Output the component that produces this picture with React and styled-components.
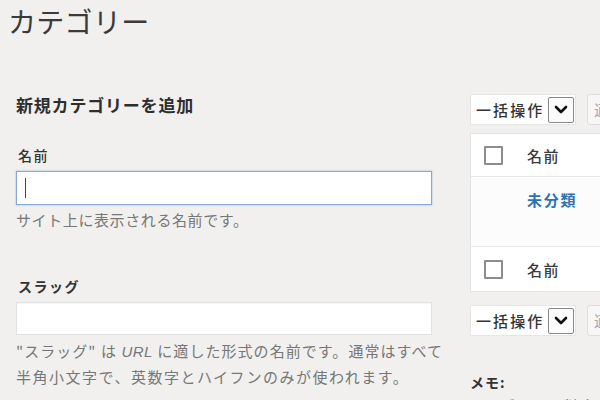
import React from 'react';
import styled, { createGlobalStyle } from 'styled-components';

const GlobalStyle = createGlobalStyle`
  html, body {
    margin: 0;
    padding: 0;
    background: #f1f0ee;
  }
  body {
    font-family: "Noto Sans CJK JP", "Noto Sans", sans-serif;
    color: #333;
  }
`;

const Page = styled.div`
  width: 600px;
  height: 400px;
  overflow: hidden;
  padding: 0 0 0 8px;
  box-sizing: border-box;
`;

const Title = styled.h1`
  margin: 0;
  padding-top: 2px;
  font-size: 28px;
  line-height: 38px;
  font-weight: 400;
  color: #3a3a3a;
  letter-spacing: 0.3px;
`;

const Columns = styled.div`
  display: flex;
  gap: 38px;
  margin-top: 54px;
  padding-left: 8px;
`;

const Left = styled.div`
  width: 416px;
  flex-shrink: 0;
`;

const Right = styled.div`
  width: 320px;
  flex-shrink: 0;
`;

const Heading = styled.h2`
  margin: 0;
  font-size: 17px;
  line-height: 22px;
  font-weight: 700;
  letter-spacing: 0.8px;
  color: #2e2e2e;
`;

const Label = styled.div`
  margin: ${(p) => p.$top}px 0 0 2px;
  font-size: 14px;
  line-height: 20px;
  font-weight: ${(p) => (p.$bold ? 700 : 500)};
  letter-spacing: 1.5px;
  color: #333;
`;

const Field = styled.div`
  margin-top: ${(p) => p.$top}px;
  height: ${(p) => p.$h}px;
  box-sizing: border-box;
  background: #fff;
  border: 1px solid ${(p) => (p.$focus ? '#86a9d3' : '#e2e2e2')};
  box-shadow: ${(p) => (p.$focus ? '0 0 2px rgba(60,120,200,0.45)' : 'inset 0 1px 1px rgba(0,0,0,0.04)')};
  display: flex;
  align-items: center;
  padding-left: 8px;
`;

const Caret = styled.span`
  width: 1px;
  height: 20px;
  background: #444;
`;

const Hint = styled.p`
  margin: ${(p) => p.$top}px 0 0;
  font-size: 15px;
  line-height: 25px;
  letter-spacing: 0.6px;
  color: #777;
  white-space: nowrap;
`;

const DescLine = styled.span`
  display: block;
  letter-spacing: ${(p) => p.$ls}px;

  em {
    font-family: "Liberation Sans", sans-serif;
    letter-spacing: 0.5px;
  }
`;

const ActionBar = styled.div`
  display: flex;
  gap: 11px;
  margin-top: ${(p) => p.$top}px;
`;

const Select = styled.div`
  width: 106px;
  height: 31px;
  box-sizing: border-box;
  background: #fff;
  border: 1px solid #e6e6e6;
  display: flex;
  align-items: center;
  padding-left: 5px;
  font-size: 15px;
  font-weight: 500;
  letter-spacing: 2.1px;
  color: #333;
`;

const SelectText = styled.span`
  flex: 1;
  white-space: nowrap;
`;

const ArrowBox = styled.span`
  width: 26px;
  height: 26px;
  margin-right: 1px;
  box-sizing: border-box;
  border: 1px solid #888;
  border-radius: 2px;
  display: flex;
  align-items: center;
  justify-content: center;
  background: #fbfbfb;
`;

const ApplyButton = styled.div`
  width: 60px;
  height: 31px;
  box-sizing: border-box;
  background: #f7f7f7;
  border: 1px solid #ddd;
  border-radius: 3px;
  font-size: 15px;
  line-height: 29px;
  padding-left: 6px;
  color: #aaa;
`;

const Table = styled.div`
  margin-top: 8px;
  background: #fff;
  border: 1px solid #e3e3e3;
  border-right: none;
`;

const Row = styled.div`
  display: flex;
  align-items: ${(p) => (p.$top ? 'flex-start' : 'center')};
  height: ${(p) => p.$h}px;
  padding-left: 13px;
  box-sizing: border-box;
  padding-top: ${(p) => (p.$top ? 12 : 0)}px;
  background: ${(p) => (p.$alt ? '#fcfcfc' : '#fff')};
  border-bottom: ${(p) => (p.$last ? 'none' : '1px solid #e8e8e8')};
`;

const Check = styled.span`
  width: 19px;
  height: 19px;
  box-sizing: border-box;
  border: 2px solid #8d8d8d;
  border-radius: 1px;
  background: #fff;
  flex-shrink: 0;
`;

const Spacer = styled.span`
  width: 19px;
  flex-shrink: 0;
`;

const ColText = styled.span`
  margin-left: 24px;
  font-size: 15px;
  font-weight: 500;
  letter-spacing: 1.5px;
  color: #3b3b3b;
`;

const CatLink = styled.a`
  margin-left: 24px;
  font-size: 15px;
  font-weight: 700;
  letter-spacing: 1.7px;
  color: #2d72b0;
  text-decoration: none;
`;

const Memo = styled.div`
  margin-top: 36px;
  font-size: 14px;
  font-weight: 700;
  color: #333;
  letter-spacing: 1px;
`;

const MemoText = styled.div`
  margin-top: 3px;
  font-size: 14px;
  line-height: 20px;
  color: #666;
  letter-spacing: 1.5px;
  white-space: nowrap;
`;

function Chevron() {
  return (
    <svg width="14" height="10" viewBox="0 0 14 10">
      <polyline points="2,2 7,7 12,2" fill="none" stroke="#111" strokeWidth="2.6" strokeLinecap="round" strokeLinejoin="round" />
    </svg>
  );
}

function BulkActions({ top }) {
  return (
    <ActionBar $top={top}>
      <Select>
        <SelectText>一括操作</SelectText>
        <ArrowBox>
          <Chevron />
        </ArrowBox>
      </Select>
      <ApplyButton>適用</ApplyButton>
    </ActionBar>
  );
}

export default function App() {
  return (
    <Page>
      <GlobalStyle />
      <Title>カテゴリー</Title>
      <Columns>
        <Left>
          <Heading>新規カテゴリーを追加</Heading>
          <Label $top={29}>名前</Label>
          <Field $top={6} $h={34} $focus>
            <Caret />
          </Field>
          <Hint $top={2}>サイト上に表示される名前です。</Hint>
          <Label $top={44} $bold>スラッグ</Label>
          <Field $top={6} $h={33} />
          <Hint $top={3}>
            <DescLine $ls={1.05}>
              "スラッグ" は <em>URL</em> に適した形式の名前です。通常はすべて
            </DescLine>
            <DescLine $ls={1.5}>半角小文字で、英数字とハイフンのみが使われます。</DescLine>
          </Hint>
        </Left>
        <Right>
          <BulkActions top={0} />
          <Table>
            <Row $h={43}>
              <Check />
              <ColText>名前</ColText>
            </Row>
            <Row $h={70} $top $alt>
              <Spacer />
              <CatLink href="#">未分類</CatLink>
            </Row>
            <Row $h={44} $last>
              <Check />
              <ColText>名前</ColText>
            </Row>
          </Table>
          <BulkActions top={13} />
          <Memo>メモ:</Memo>
          <MemoText>カテゴリーを削除しても、そのカテゴリーの投稿は削除されません。</MemoText>
        </Right>
      </Columns>
    </Page>
  );
}
